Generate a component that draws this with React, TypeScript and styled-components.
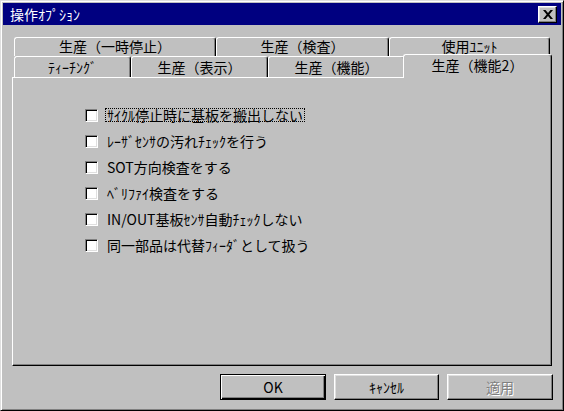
import styled, { createGlobalStyle } from "styled-components";

const GlobalStyle = createGlobalStyle`
    html, body {
        margin: 0;
        padding: 0;
        background: #c0c0c0;
    }

    body {
        font-family: "Noto Sans CJK JP", "Liberation Sans", sans-serif;
        font-size: 14px;
        color: #000;
    }
`;

const Window = styled.div`
    width: 564px;
    height: 411px;
    box-sizing: border-box;
    background: #c0c0c0;
    border: 1px solid;
    border-color: #dfdfdf #000 #000 #dfdfdf;
    box-shadow: inset 1px 1px #fff, inset -1px -1px #808080;
    padding: 2px;
    display: flex;
    flex-direction: column;
`;

const TitleBar = styled.div`
    height: 22px;
    background: #000080;
    color: #fff;
    display: flex;
    align-items: center;
    justify-content: space-between;
    padding: 0 4px 0 7px;
    line-height: 1;
`;

const TitleText = styled.span`
    font-size: 14px;
`;

const CloseButton = styled.div`
    width: 19px;
    height: 17px;
    box-sizing: border-box;
    background: #c0c0c0;
    border: 1px solid;
    border-color: #fff #000 #000 #fff;
    box-shadow: inset -1px -1px #808080, inset 1px 1px #dfdfdf;
    display: flex;
    align-items: center;
    justify-content: center;
`;

const Body = styled.div`
    flex: 1;
    display: flex;
    flex-direction: column;
    padding: 12px 8px 0 9px;
`;

const TabRow = styled.div<{ $height: number }>`
    display: flex;
    height: ${(p) => p.$height}px;
    padding-left: 2px;
    align-items: flex-end;
`;

const Tab = styled.div<{ $w: number; $pad: number; $active?: boolean }>`
    width: ${(p) => p.$w}px;
    height: ${(p) => (p.$active ? "calc(100% + 3px)" : "100%")};
    box-sizing: border-box;
    background: #c0c0c0;
    border-top: 1px solid #fff;
    border-left: 1px solid #fff;
    border-right: 1px solid #000;
    border-radius: 3px 3px 0 0;
    box-shadow: inset -1px 0 #808080;
    display: flex;
    justify-content: center;
    padding-top: ${(p) => p.$pad}px;
    line-height: 15px;
    position: relative;
    z-index: ${(p) => (p.$active ? 2 : 1)};
    margin-left: ${(p) => (p.$active ? -2 : 0)}px;
    margin-bottom: ${(p) => (p.$active ? -1 : 0)}px;
`;

const Panel = styled.div`
    width: 540px;
    height: 289px;
    box-sizing: border-box;
    border: 1px solid;
    border-color: #fff #000 #000 #fff;
    box-shadow: inset -1px -1px #808080;
    padding: 24px 0 0 72px;
    display: flex;
    flex-direction: column;
`;

const CheckRow = styled.div`
    height: 26px;
    display: flex;
    align-items: center;
`;

const CheckBox = styled.span`
    width: 13px;
    height: 13px;
    box-sizing: border-box;
    background: #fff;
    border: 1px solid;
    border-color: #808080 #fff #fff #808080;
    box-shadow: inset 1px 1px #000, inset -1px -1px #dfdfdf;
    flex-shrink: 0;
`;

const CheckLabel = styled.span<{ $focus?: boolean }>`
    margin-left: 7px;
    padding: 0 1px;
    line-height: 12px;
    height: 12px;
    display: flex;
    align-items: center;
    border: 1px dotted ${(p) => (p.$focus ? "#000" : "transparent")};
`;

const ButtonRow = styled.div`
    display: flex;
    justify-content: flex-end;
    gap: 8px;
    margin-top: 8px;
`;

const Button = styled.div<{ $default?: boolean; $disabled?: boolean; $w: number }>`
    width: ${(p) => p.$w}px;
    height: 26px;
    box-sizing: border-box;
    background: #c0c0c0;
    border: 1px solid;
    border-color: ${(p) => (p.$default ? "#000" : "#fff #000 #000 #fff")};
    box-shadow: ${(p) =>
        p.$default
            ? "inset 1px 1px #fff, inset -1px -1px #000, inset -2px -2px #808080"
            : "inset -1px -1px #808080, inset 1px 1px #dfdfdf"};
    display: flex;
    align-items: center;
    justify-content: center;
    color: ${(p) => (p.$disabled ? "#808080" : "#000")};
    text-shadow: ${(p) => (p.$disabled ? "1px 1px #fff" : "none")};
`;

const options = [
    "ｻｲｸﾙ停止時に基板を搬出しない",
    "ﾚｰｻﾞｾﾝｻの汚れﾁｪｯｸを行う",
    "SOT方向検査をする",
    "ﾍﾞﾘﾌｧｲ検査をする",
    "IN/OUT基板ｾﾝｻ自動ﾁｪｯｸしない",
    "同一部品は代替ﾌｨｰﾀﾞとして扱う",
];

export default function App() {
    return (
        <>
            <GlobalStyle />
            <Window>
                <TitleBar>
                    <TitleText>操作ｵﾌﾟｼｮﾝ</TitleText>
                    <CloseButton>
                        <svg width="10" height="9" viewBox="0 0 10 9">
                            <path d="M0 0h2.5l2.5 3 2.5-3H10L6.3 4.5 10 9H7.5L5 6 2.5 9H0l3.7-4.5z" fill="#000" />
                        </svg>
                    </CloseButton>
                </TitleBar>

                <Body>
                    <TabRow $height={19}>
                        <Tab $w={202} $pad={1}>生産（一時停止）</Tab>
                        <Tab $w={173} $pad={1}>生産（検査）</Tab>
                        <Tab $w={161} $pad={1}>使用ﾕﾆｯﾄ</Tab>
                    </TabRow>
                    <TabRow $height={21}>
                        <Tab $w={117} $pad={3}>ﾃｨｰﾁﾝｸﾞ</Tab>
                        <Tab $w={137} $pad={3}>生産（表示）</Tab>
                        <Tab $w={137} $pad={3}>生産（機能）</Tab>
                        <Tab $w={149} $pad={3} $active>生産（機能2）</Tab>
                    </TabRow>

                    <Panel>
                        {options.map((o, i) => (
                            <CheckRow key={o}>
                                <CheckBox />
                                <CheckLabel $focus={i === 0}>{o}</CheckLabel>
                            </CheckRow>
                        ))}
                    </Panel>

                    <ButtonRow>
                        <Button $w={106} $default>OK</Button>
                        <Button $w={105}>ｷｬﾝｾﾙ</Button>
                        <Button $w={106} $disabled>適用</Button>
                    </ButtonRow>
                </Body>
            </Window>
        </>
    );
}
